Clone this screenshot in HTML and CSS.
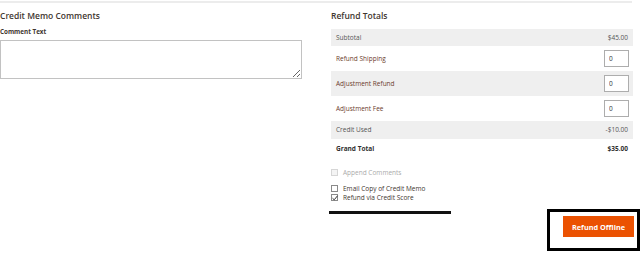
FILE: index.html
```html
<!DOCTYPE html>
<html>
<head>
<meta charset="utf-8">
<link rel="stylesheet" href="styles.css">
</head>
<body>
<div class="topline"></div>
<div class="page">
  <section class="comments">
    <h2 class="title">Credit Memo Comments</h2>
    <label class="field-label">Comment Text</label>
    <textarea class="comment-box"></textarea>
  </section>
  <section class="totals">
    <h2 class="title">Refund Totals</h2>
    <div class="table">
      <div class="row shade text"><span class="lbl grey">Subtotal</span><span class="val">$45.00</span></div>
      <div class="row input"><span class="lbl">Refund Shipping</span><input class="num" value="0"></div>
      <div class="row shade input"><span class="lbl">Adjustment Refund</span><input class="num" value="0"></div>
      <div class="row input"><span class="lbl">Adjustment Fee</span><input class="num" value="0"></div>
      <div class="row shade text"><span class="lbl grey">Credit Used</span><span class="val">-$10.00</span></div>
      <div class="row text total"><span class="lbl">Grand Total</span><span class="val">$35.00</span></div>
    </div>
    <div class="checks">
      <label class="check disabled"><span class="box"></span>Append Comments</label>
      <label class="check first"><span class="box"></span>Email Copy of Credit Memo</label>
      <label class="check"><span class="box checked"><svg viewBox="0 0 8 8" width="8" height="8"><path d="M1.5 4.2 L3.2 5.8 L6.5 1.8" fill="none" stroke="#333" stroke-width="1"/></svg></span>Refund via Credit Score</label>
    </div>
    <div class="footer">
      <div class="rule"></div>
      <div class="frame"><button class="primary">Refund Offline</button></div>
    </div>
  </section>
</div>
</body>
</html>
```
FILE: styles.css
```css
* { box-sizing: border-box; }
body {
  margin: 0;
  background: #fff;
  font-family: "Open Sans", "Liberation Sans", sans-serif;
  color: #41362f;
}
.topline {
  margin-top: 1px;
  width: 632px;
  height: 2px;
  background: #ececec;
}
.page {
  display: flex;
  gap: 27px;
}
.title {
  margin: 0;
  font-size: 8.5px;
  line-height: 14px;
  font-weight: 600;
  color: #41362f;
}
.comments {
  width: 302px;
  padding-top: 6px;
}
.field-label {
  display: block;
  margin-top: 4px;
  font-size: 6.3px;
  line-height: 10px;
  font-weight: 700;
  color: #41362f;
}
.comment-box {
  display: block;
  margin-top: 3px;
  width: 302px;
  height: 39px;
  border: 1px solid #c2c2c2;
  resize: vertical;
  font: inherit;
}
.totals {
  width: 311px;
  padding-top: 6px;
}
.totals .title, .totals .table, .checks {
  margin-left: 2px;
}
.totals .title { margin-bottom: 6px; }
.table { width: 302px; }
.row {
  display: flex;
  justify-content: space-between;
  align-items: center;
  padding: 4px 5px 4px 5px;
  font-size: 6.5px;
  line-height: 10px;
}
.row.text { height: 18px; }
.row.shade { background: #efefef; }
.row.input { height: 25px; padding: 4px 4px 4px 5px; }
.row:first-child { height: 17px; }
.row.total { height: 19px; font-weight: 700; color: #303030; }
.lbl { color: #6b3b2b; }
.lbl.grey { color: #555; }
.total .lbl { color: #303030; }
.val { color: #555; }
.total .val { color: #303030; }
.num {
  width: 25px;
  height: 17px;
  border: 1px solid #adadad;
  padding: 0 4px;
  font: inherit;
  font-size: 6.5px;
  color: #333;
  background: #fff;
}
.checks {
  margin-top: 10px;
  display: flex;
  flex-direction: column;
}
.check {
  display: flex;
  align-items: center;
  gap: 5px;
  font-size: 6.5px;
  line-height: 9px;
  color: #41362f;
}
.check.disabled { color: #aaa; margin-bottom: 7px; }
.check.disabled .box { border-color: #d6d6d6; background: #f4f4f4; }
.box {
  width: 7px;
  height: 7px;
  border: 1px solid #8a8a8a;
  display: flex;
  align-items: center;
  justify-content: center;
  overflow: visible;
}
.box svg { flex: none; }
.footer {
  display: flex;
  justify-content: space-between;
  align-items: flex-start;
  margin-top: 7px;
}
.rule {
  margin-top: 2px;
  width: 122px;
  height: 3px;
  background: #111;
}
.frame {
  width: 93px;
  height: 42px;
  border: 3px solid #000;
  padding: 4px 3px 0 13px;
}
.primary {
  display: block;
  width: 71px;
  height: 21px;
  border: none;
  background: #eb5202;
  color: #fff;
  font-family: "Open Sans", "Liberation Sans", sans-serif;
  font-size: 7.3px;
  font-weight: 700;
  padding: 0;
}
```
